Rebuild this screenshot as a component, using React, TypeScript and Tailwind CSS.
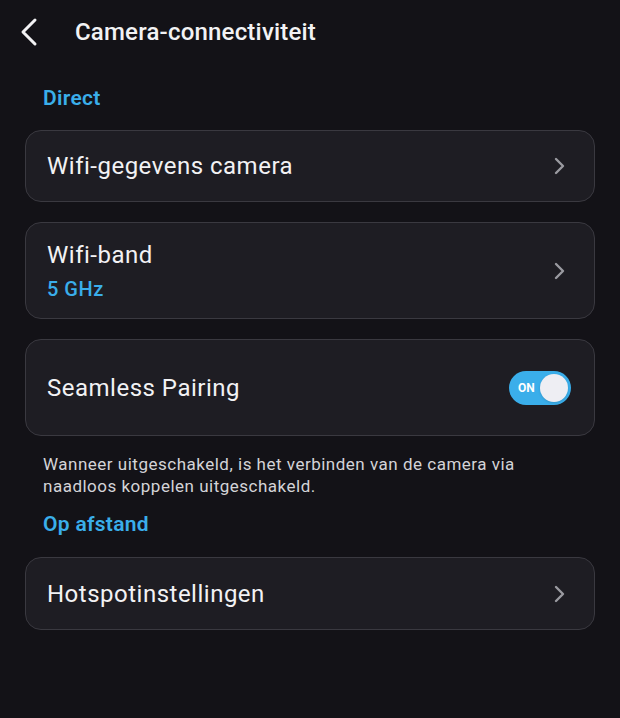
import { memo } from "react";

// Chevron used on every navigable row
const Chevron = () => (
  <svg width="14" height="22" viewBox="0 0 14 22" fill="none" className="shrink-0">
    <path d="M4 4l7 7-7 7" stroke="#9a9aa0" strokeWidth="2.4" strokeLinecap="round" strokeLinejoin="round" />
  </svg>
);

const Toggle = ({ on }: { on: boolean }) => (
  <div className="flex h-[34px] w-[62px] items-center justify-between rounded-full bg-[#3aaeea] pl-[9px] pr-[3px]">
    <span className="text-[12px] font-bold text-white">{on ? "ON" : "OFF"}</span>
    <span className="h-[28px] w-[28px] rounded-full bg-[#eeeef3] shadow" />
  </div>
);

const Card = memo(({ children, className = "" }: { children: React.ReactNode; className?: string }) => (
  <div
    className={`mx-[25px] flex items-center justify-between rounded-[16px] border border-[#3a3940] bg-[#1e1d23] pl-[21px] pr-[28px] ${className}`}
  >
    {children}
  </div>
));

Card.displayName = "Card";

const App = memo(() => {
  return (
    <div
      className="h-[718px] w-[620px] overflow-hidden bg-[#131217] text-[#f2f2f4]"
      style={{ fontFamily: "Roboto, 'Noto Sans', sans-serif" }}
    >
      {/* Header */}
      <header className="flex h-[64px] items-center">
        <div className="flex w-[75px] items-center pl-[18px]">
          <svg width="22" height="30" viewBox="0 0 22 30" fill="none">
            <path d="M17 3L5 15l12 12" stroke="#f2f2f4" strokeWidth="3" strokeLinecap="round" strokeLinejoin="round" />
          </svg>
        </div>
        <h1 className="text-[24px] font-medium tracking-[0.2px]">Camera-connectiviteit</h1>
      </header>

      <div className="px-[43px] pt-[21px] pb-[19px] text-[21px] font-semibold leading-[26px] tracking-[0.3px] text-[#3aaeea]">
        Direct
      </div>

      <Card className="h-[72px]">
        <span className="text-[24px] tracking-[0.5px]">Wifi-gegevens camera</span>
        <Chevron />
      </Card>

      <Card className="mt-[20px] h-[97px]">
        <div className="flex flex-col">
          <span className="text-[24px] leading-[30px] tracking-[0.5px]">Wifi-band</span>
          <span className="mt-[6px] text-[20px] font-medium leading-[26px] tracking-[0.5px] text-[#3aaeea]">5 GHz</span>
        </div>
        <Chevron />
      </Card>

      <Card className="mt-[20px] h-[97px] !pr-[23px]">
        <span className="text-[24px] tracking-[0.5px]">Seamless Pairing</span>
        <Toggle on />
      </Card>

      <p className="pl-[43px] pr-[60px] pt-[17px] text-[17px] leading-[22px] tracking-[0.5px] text-[#d4d4d8]">
        Wanneer uitgeschakeld, is het verbinden van de camera via naadloos koppelen uitgeschakeld.
      </p>

      <div className="px-[43px] pt-[14px] pb-[20px] text-[21px] font-semibold leading-[26px] tracking-[0.3px] text-[#3aaeea]">
        Op afstand
      </div>

      <Card className="h-[73px]">
        <span className="text-[24px] tracking-[0.5px]">Hotspotinstellingen</span>
        <Chevron />
      </Card>
    </div>
  );
});

App.displayName = "App";

export default App;
